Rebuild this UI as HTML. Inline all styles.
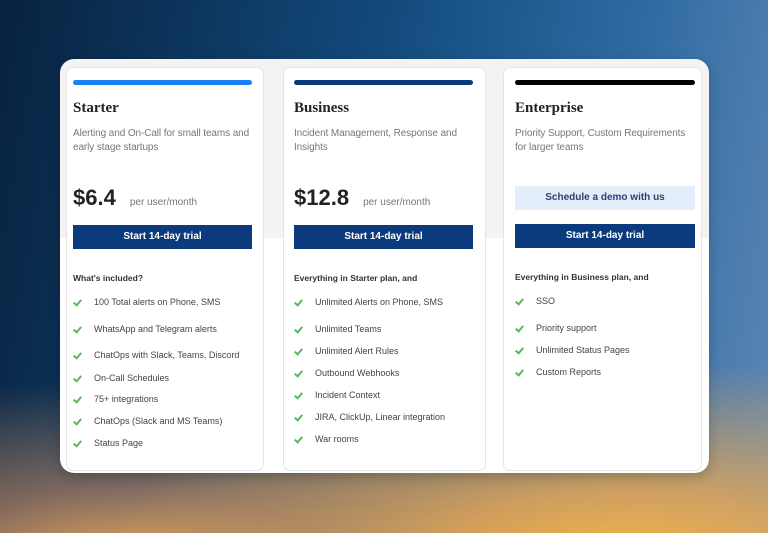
<!DOCTYPE html>
<html><head><style>
*{margin:0;padding:0;box-sizing:border-box}
body{width:768px;height:533px;overflow:hidden;position:relative;font-family:"Liberation Sans",sans-serif;
background:
radial-gradient(ellipse 520px 200px at 620px 560px,#f7b446 0%,rgba(240,170,80,.8) 35%,rgba(200,150,110,0) 100%),
radial-gradient(ellipse 500px 180px at 120px 560px,#e3a25a 0%,rgba(200,140,100,.6) 40%,rgba(150,130,130,0) 100%),
linear-gradient(100deg,#08223f 0%,#124a7c 45%,#2f6aa3 75%,#5d88b4 100%);}
.wrap{position:absolute;left:60px;top:59px;width:649px;height:414px;border-radius:14px;background:linear-gradient(#f5f2f2 0,#f5f2f2 179px,#fff 179px);box-shadow:0 4px 12px rgba(0,0,0,.2)}
.card{position:absolute;top:8px;height:404px;background:#fff;border:1px solid #e6e6e6;border-radius:7px;padding:0 11px 0 6px}
.bar{height:5px;border-radius:3px;margin-top:12px}
h2{font-family:"Liberation Serif",serif;font-size:15px;font-weight:bold;color:#222;margin-top:15px;height:20px}
.desc{font-size:10px;color:#777;line-height:14px;margin-top:7px;height:50px;letter-spacing:-.1px}
.price{margin-top:8px;height:40px;display:flex;align-items:baseline}
.price b{font-size:22px;color:#222}
.price span{font-size:10px;color:#777;margin-left:14px}
.btn{height:24px;background:#0b3b7c;color:#fff;font-size:10px;font-weight:bold;text-align:center;line-height:24px}
.demo{height:24px;background:#e4eefa;color:#2a3f72;font-size:10px;font-weight:bold;text-align:center;line-height:24px;margin-top:9px;margin-bottom:14px}
.inc{font-size:8.5px;font-weight:bold;color:#333;margin-top:24px;margin-bottom:13px}
ul{list-style:none}
li{font-size:9px;color:#444;position:relative;padding-left:21px;height:22px;line-height:12px;white-space:nowrap}
li:before{content:"";position:absolute;left:2px;top:2px;width:3px;height:6px;border:solid #5cb85c;border-width:0 2px 2px 0;transform:rotate(40deg)}
</style></head><body>
<div class="wrap">
<div class="card" style="left:6px;width:198px">
<div class="bar" style="background:#1a7ff0"></div>
<h2>Starter</h2>
<div class="desc">Alerting and On-Call for small teams and early stage startups</div>
<div class="price"><b>$6.4</b><span>per user/month</span></div>
<div class="btn">Start 14-day trial</div>
<div class="inc">What's included?</div>
<ul><li style="height:27px">100 Total alerts on Phone, SMS</li><li style="height:26px">WhatsApp and Telegram alerts</li><li style="height:23px">ChatOps with Slack, Teams, Discord</li><li style="height:21px">On-Call Schedules</li><li>75+ integrations</li><li>ChatOps (Slack and MS Teams)</li><li>Status Page</li></ul>
</div>
<div class="card" style="left:223px;width:203px;padding-left:10px;padding-right:12px">
<div class="bar" style="background:#0c3a78"></div>
<h2>Business</h2>
<div class="desc">Incident Management, Response and Insights</div>
<div class="price"><b>$12.8</b><span>per user/month</span></div>
<div class="btn">Start 14-day trial</div>
<div class="inc">Everything in Starter plan, and</div>
<ul><li style="height:27px">Unlimited Alerts on Phone, SMS</li><li>Unlimited Teams</li><li>Unlimited Alert Rules</li><li>Outbound Webhooks</li><li>Incident Context</li><li>JIRA, ClickUp, Linear integration</li><li>War rooms</li></ul>
</div>
<div class="card" style="left:443px;width:199px;padding-left:11px;padding-right:6px">
<div class="bar" style="background:#000"></div>
<h2>Enterprise</h2>
<div class="desc">Priority Support, Custom Requirements for larger teams</div>
<div class="demo">Schedule a demo with us</div>
<div class="btn">Start 14-day trial</div>
<div class="inc">Everything in Business plan, and</div>
<ul><li style="height:27px">SSO</li><li>Priority support</li><li>Unlimited Status Pages</li><li>Custom Reports</li></ul>
</div>
</div>
</body></html>
